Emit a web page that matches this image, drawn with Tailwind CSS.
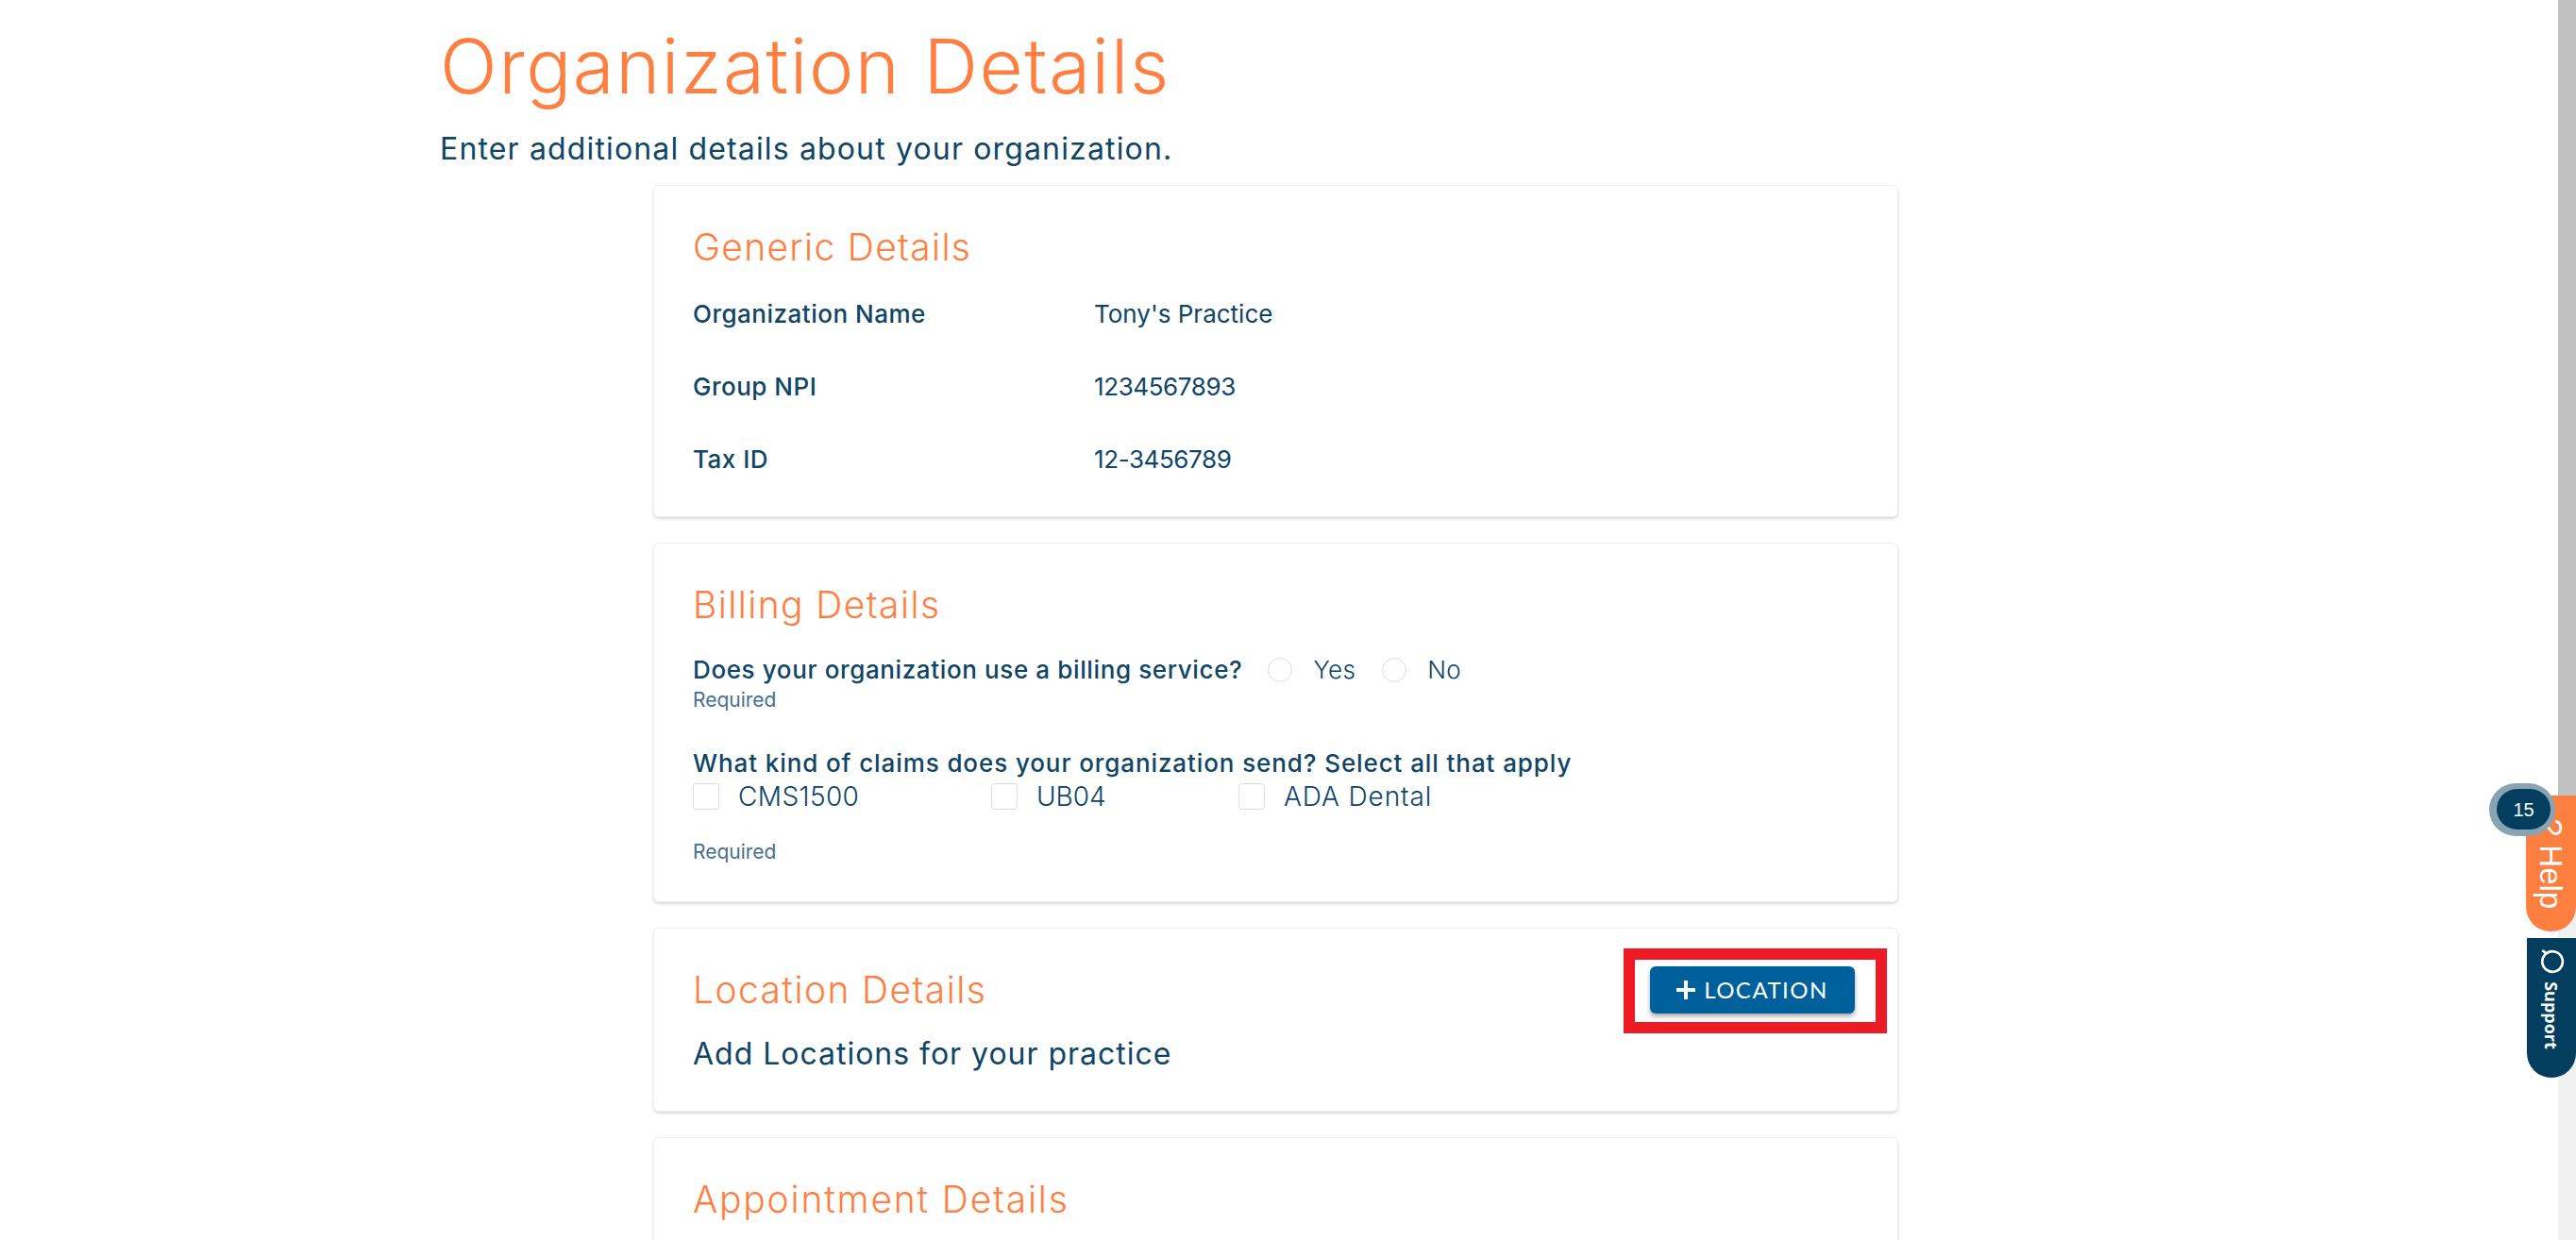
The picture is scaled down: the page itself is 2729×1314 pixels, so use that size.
<!DOCTYPE html>
<html lang="en">
<head>
    <meta charset="UTF-8">
    <title>Organization Details</title>
    <script src="https://cdn.jsdelivr.net/npm/@tailwindcss/browser@4"></script>
</head>
<body class="bg-white overflow-hidden font-['Inter','Open_Sans',sans-serif] text-[#0f4565]">
    <div class="relative h-[1314px] w-[2729px] overflow-hidden">
        <!-- Page content -->
        <main class="pl-[466px] pt-[24px]">
            <h1 class="text-[80px] leading-[92px] font-light text-[#ff7f41] tracking-[1.5px]">Organization Details</h1>
            <p class="mt-[20px] text-[32px] leading-[44px] tracking-[1.15px]">Enter additional details about your organization.</p>

            <div class="ml-[226px] mt-[16px] w-[1319px] flex flex-col gap-[27px]">
                <!-- Generic Details -->
                <section class="h-[352px] rounded-[6px] border border-[#eeeeee] shadow-[0_2px_3px_rgba(0,0,0,0.15)] px-[41px] pt-[40px]">
                    <h2 class="text-[39px] leading-[50px] font-light text-[#ff7f41] tracking-[1.3px]">Generic Details</h2>
                    <div class="mt-[30px] grid grid-cols-[425px_1fr] gap-y-[46px] text-[26px] leading-[31px]">
                        <span class="font-medium tracking-[0.5px]">Organization Name</span><span>Tony's Practice</span>
                        <span class="font-medium tracking-[0.5px]">Group NPI</span><span class="tracking-[-0.4px]">1234567893</span>
                        <span class="font-medium tracking-[0.5px]">Tax ID</span><span class="tracking-[-0.4px]">12-3456789</span>
                    </div>
                </section>

                <!-- Billing Details -->
                <section class="h-[381px] rounded-[6px] border border-[#eeeeee] shadow-[0_2px_3px_rgba(0,0,0,0.15)] px-[41px] pt-[40px]">
                    <h2 class="text-[39px] leading-[50px] font-light text-[#ff7f41] tracking-[1.4px]">Billing Details</h2>
                    <div class="mt-[26px] flex items-center text-[26px] leading-[36px]">
                        <span class="font-medium tracking-[0.62px]">Does your organization use a billing service?</span>
                        <span class="ml-[27px] w-[26px] h-[26px] rounded-full border border-[#dddddd]"></span>
                        <span class="ml-[22px] tracking-[0.3px] font-light">Yes</span>
                        <span class="ml-[28px] w-[26px] h-[26px] rounded-full border border-[#dddddd]"></span>
                        <span class="ml-[22px] tracking-[0.3px] font-light">No</span>
                    </div>
                    <p class="text-[21px] leading-[26px] mt-[1px] text-[#47708a]">Required</p>
                    <p class="mt-[36px] text-[26px] leading-[36px] font-medium tracking-[0.9px]">What kind of claims does your organization send? Select all that apply</p>
                    <div class="-mt-[3px] flex items-center text-[28px] leading-[40px] font-light">
                        <span class="w-[28px] h-[28px] rounded-[4px] border border-[#dddddd]"></span>
                        <span class="ml-[20px] w-[268px] tracking-[0.4px]">CMS1500</span>
                        <span class="w-[28px] h-[28px] rounded-[4px] border border-[#dddddd]"></span>
                        <span class="ml-[20px] w-[214px]">UB04</span>
                        <span class="w-[28px] h-[28px] rounded-[4px] border border-[#dddddd]"></span>
                        <span class="ml-[20px] tracking-[0.9px]">ADA Dental</span>
                    </div>
                    <p class="text-[21px] leading-[26px] mt-[26px] text-[#47708a]">Required</p>
                </section>

                <!-- Location Details -->
                <section class="h-[195px] rounded-[6px] border border-[#eeeeee] shadow-[0_2px_3px_rgba(0,0,0,0.15)] px-[41px] pt-[40px] flex justify-between">
                    <div>
                        <h2 class="text-[39px] leading-[50px] font-light text-[#ff7f41] tracking-[1.4px]">Location Details</h2>
                        <p class="mt-[21px] text-[32px] leading-[44px] tracking-[0.98px]">Add Locations for your practice</p>
                    </div>
                    <div class="-mt-[19px] -mr-[30px] h-[90px] w-[279px] border-[12px] border-[#ed1c24] flex items-center justify-center">
                        <button class="h-[50px] w-[217px] mb-[3px] mr-[6px] rounded-[6px] bg-[#00609c] shadow-[0_3px_5px_rgba(0,0,0,0.35)] text-white flex items-center justify-center gap-[9px] text-[24px] tracking-[1.5px] font-['Lato',sans-serif]">
                            <svg width="20" height="20" viewBox="0 0 20 20" fill="#ffffff"><path d="M8 0h4v8h8v4h-8v8H8v-8H0V8h8z"/></svg>
                            <span class="font-normal">LOCATION</span>
                        </button>
                    </div>
                </section>

                <!-- Appointment Details -->
                <section class="h-[300px] rounded-[6px] border border-[#eeeeee] shadow-[0_2px_3px_rgba(0,0,0,0.15)] px-[41px] pt-[40px]">
                    <h2 class="text-[39px] leading-[50px] font-light text-[#ff7f41] tracking-[1.8px]">Appointment Details</h2>
                </section>
            </div>
        </main>

        <!-- Scrollbar -->
        <div class="absolute top-0 right-0 w-[19px] h-full bg-[#f1f1f1]">
            <div class="h-[900px] bg-[#c1c1c1]"></div>
        </div>

        <!-- Help tab -->
        <div class="absolute left-[2676px] top-[843px] w-[53px] h-[144px] rounded-bl-[26px] rounded-br-[26px] rounded-tl-[26px] bg-[#ff7f41] flex items-center justify-center">
            <span class="rotate-90 whitespace-nowrap text-white text-[33px] leading-none font-['Liberation_Sans',sans-serif]">? Help</span>
        </div>
        <!-- Count badge -->
        <div class="absolute left-[2637px] top-[830px] w-[70px] h-[56px] rounded-full bg-[#8aa3b3]"></div>
        <div class="absolute left-[2645px] top-[836px] w-[57px] h-[43px] rounded-full bg-[#033e5f] flex items-center justify-center text-white text-[20px] font-['Liberation_Sans',sans-serif]">15</div>
        <!-- Support tab -->
        <div class="absolute left-[2677px] top-[994px] w-[52px] h-[148px] rounded-b-[26px] bg-[#033e5f] flex flex-col items-center pt-[11px]">
            <svg width="28" height="28" viewBox="0 0 26 26" fill="none" stroke="#ffffff" stroke-width="2.5"><path d="M4 2 L8 5 A10 10 0 1 1 4 13 A10 10 0 0 1 8 5"/></svg>
            <span class="rotate-90 mt-[34px] whitespace-nowrap text-white text-[18px] leading-none font-bold font-['Open_Sans',sans-serif]">Support</span>
        </div>
    </div>
</body>
</html>
